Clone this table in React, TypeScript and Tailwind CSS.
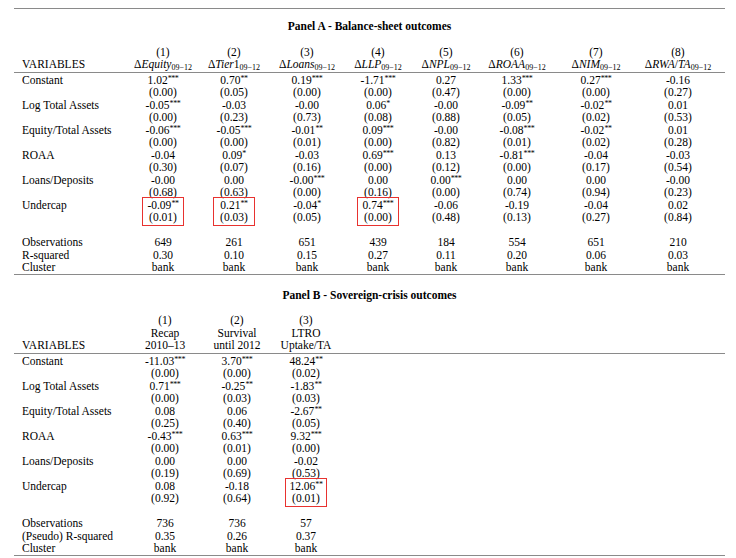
import type { ReactNode } from "react"

type Line = { label?: string; vals: string[]; box?: number[] }

function Val({ v }: { v: string }) {
  const m = v.match(/^(.*?)(\**)$/)
  const num = m ? m[1] : v
  const stars = m ? m[2] : ""
  return (
    <>
      {num}
      {stars && <span className="relative -top-[3px] text-[8px] tracking-[-0.4px]">{stars}</span>}
    </>
  )
}

function Sub({ children }: { children: ReactNode }) {
  return <span className="relative top-[2px] text-[8px]">{children}</span>
}

function Rule() {
  return <div className="border-t border-[#8a8a8a]" />
}

const panelA: Line[] = [
  { label: "Constant", vals: ["1.02***", "0.70**", "0.19***", "-1.71***", "0.27", "1.33***", "0.27***", "-0.16"] },
  { vals: ["(0.00)", "(0.05)", "(0.00)", "(0.00)", "(0.47)", "(0.00)", "(0.00)", "(0.27)"] },
  { label: "Log Total Assets", vals: ["-0.05***", "-0.03", "-0.00", "0.06*", "-0.00", "-0.09**", "-0.02**", "0.01"] },
  { vals: ["(0.00)", "(0.23)", "(0.73)", "(0.08)", "(0.88)", "(0.05)", "(0.02)", "(0.53)"] },
  { label: "Equity/Total Assets", vals: ["-0.06***", "-0.05***", "-0.01**", "0.09***", "-0.00", "-0.08***", "-0.02**", "0.01"] },
  { vals: ["(0.00)", "(0.00)", "(0.01)", "(0.00)", "(0.82)", "(0.01)", "(0.02)", "(0.28)"] },
  { label: "ROAA", vals: ["-0.04", "0.09*", "-0.03", "0.69***", "0.13", "-0.81***", "-0.04", "-0.03"] },
  { vals: ["(0.30)", "(0.07)", "(0.16)", "(0.00)", "(0.12)", "(0.00)", "(0.17)", "(0.54)"] },
  { label: "Loans/Deposits", vals: ["-0.00", "0.00", "-0.00***", "0.00", "0.00***", "0.00", "0.00", "-0.00"] },
  { vals: ["(0.68)", "(0.63)", "(0.00)", "(0.16)", "(0.00)", "(0.74)", "(0.94)", "(0.23)"] },
  { label: "Undercap", vals: ["-0.09**", "0.21**", "-0.04*", "0.74***", "-0.06", "-0.19", "-0.04", "0.02"], box: [0, 1, 3] },
  { vals: ["(0.01)", "(0.03)", "(0.05)", "(0.00)", "(0.48)", "(0.13)", "(0.27)", "(0.84)"] },
  { vals: ["", "", "", "", "", "", "", ""] },
  { label: "Observations", vals: ["649", "261", "651", "439", "184", "554", "651", "210"] },
  { label: "R-squared", vals: ["0.30", "0.10", "0.15", "0.27", "0.11", "0.20", "0.06", "0.03"] },
  { label: "Cluster", vals: ["bank", "bank", "bank", "bank", "bank", "bank", "bank", "bank"] },
]

const panelB: Line[] = [
  { label: "Constant", vals: ["-11.03***", "3.70***", "48.24**"] },
  { vals: ["(0.00)", "(0.00)", "(0.02)"] },
  { label: "Log Total Assets", vals: ["0.71***", "-0.25**", "-1.83**"] },
  { vals: ["(0.00)", "(0.03)", "(0.03)"] },
  { label: "Equity/Total Assets", vals: ["0.08", "0.06", "-2.67**"] },
  { vals: ["(0.25)", "(0.40)", "(0.05)"] },
  { label: "ROAA", vals: ["-0.43***", "0.63***", "9.32***"] },
  { vals: ["(0.00)", "(0.01)", "(0.00)"] },
  { label: "Loans/Deposits", vals: ["0.00", "0.00", "-0.02"] },
  { vals: ["(0.19)", "(0.69)", "(0.53)"] },
  { label: "Undercap", vals: ["0.08", "-0.18", "12.06**"], box: [2] },
  { vals: ["(0.92)", "(0.64)", "(0.01)"] },
  { vals: ["", "", ""] },
  { label: "Observations", vals: ["736", "736", "57"] },
  { label: "(Pseudo) R-squared", vals: ["0.35", "0.26", "0.37"] },
  { label: "Cluster", vals: ["bank", "bank", "bank"] },
]

const headA: ReactNode[] = [
  <>Δ<i>Equity</i><Sub>09−12</Sub></>,
  <>Δ<i>Tier</i>1<Sub>09−12</Sub></>,
  <>Δ<i>Loans</i><Sub>09−12</Sub></>,
  <>Δ<i>LLP</i><Sub>09−12</Sub></>,
  <>Δ<i>NPL</i><Sub>09−12</Sub></>,
  <>Δ<i>ROAA</i><Sub>09−12</Sub></>,
  <>Δ<i>NIM</i><Sub>09−12</Sub></>,
  <>Δ<i>RWA</i>/<i>TA</i><Sub>09−12</Sub></>,
]

function Body({ lines, cols }: { lines: Line[]; cols: string }) {
  return (
    <div className="pt-[1px]">
      {lines.map((ln, i) => (
        <div key={i} className={`grid ${cols} h-[12.5px] leading-[12.5px]`}>
          <div className="pl-2 whitespace-nowrap">{ln.label ?? ""}</div>
          {ln.vals.map((v, j) => (
            <div key={j} className="relative text-center whitespace-nowrap">
              <Val v={v} />
              {ln.box?.includes(j) && (
                <div className="absolute left-1/2 -translate-x-1/2 -top-[2px] w-[42px] h-[29px] border-[1.5px] border-[#e8322f]" />
              )}
            </div>
          ))}
        </div>
      ))}
    </div>
  )
}

export default function App() {
  const colsA = "grid-cols-[114px_70px_72px_74px_68px_68px_74px_84px_80px]"
  const colsB = "grid-cols-[116px_70px_74px_64px_1fr]"
  return (
    <div className="w-[736px] h-[558px] bg-white text-black text-[11.5px] font-['Liberation_Serif',serif] overflow-hidden">
      <div className="ml-[14px] w-[711px] pt-[8px]">
        <Rule />
        <div className="mt-[11px] h-[12.5px] leading-[12.5px] text-center font-bold">
          Panel A - Balance-sheet outcomes
        </div>
        <div className="mt-[13px] pb-[1px]">
          <div className={`grid ${colsA} h-[12.5px] leading-[12.5px]`}>
            <div />
            {["(1)", "(2)", "(3)", "(4)", "(5)", "(6)", "(7)", "(8)"].map((c) => (
              <div key={c} className="text-center">{c}</div>
            ))}
          </div>
          <div className={`grid ${colsA} h-[12.5px] leading-[12.5px]`}>
            <div className="pl-2">VARIABLES</div>
            {headA.map((h, i) => (
              <div key={i} className="text-center whitespace-nowrap">{h}</div>
            ))}
          </div>
        </div>
        <Rule />
        <Body lines={panelA} cols={colsA} />
        <Rule />

        <div className="mt-[14px] h-[12.5px] leading-[12.5px] text-center font-bold">
          Panel B - Sovereign-crisis outcomes
        </div>
        <div className="mt-[13px] pb-[1px]">
          <div className={`grid ${colsB} h-[12.5px] leading-[12.5px]`}>
            <div />
            <div className="text-center">(1)</div>
            <div className="text-center">(2)</div>
            <div className="text-center">(3)</div>
          </div>
          <div className={`grid ${colsB} h-[12.5px] leading-[12.5px]`}>
            <div />
            <div className="text-center">Recap</div>
            <div className="text-center">Survival</div>
            <div className="text-center">LTRO</div>
          </div>
          <div className={`grid ${colsB} h-[12.5px] leading-[12.5px]`}>
            <div className="pl-2">VARIABLES</div>
            <div className="text-center">2010–13</div>
            <div className="text-center whitespace-nowrap">until 2012</div>
            <div className="text-center">Uptake/TA</div>
          </div>
        </div>
        <Rule />
        <Body lines={panelB} cols={colsB} />
        <Rule />
      </div>
    </div>
  )
}
